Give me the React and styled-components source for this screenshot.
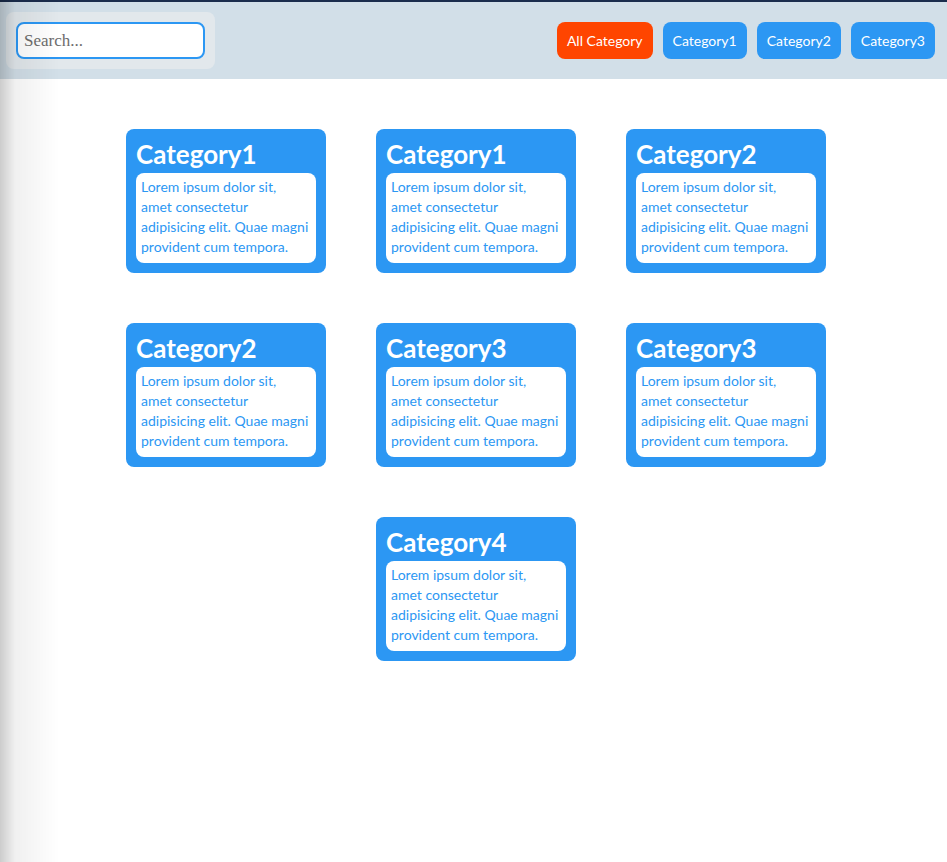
import React from "react";
import styled, { createGlobalStyle } from "styled-components";

const Global = createGlobalStyle`
  html, body { margin: 0; padding: 0; background: #fff; }
  body { font-family: "Lato", "Open Sans", sans-serif; }
  * { box-sizing: border-box; }
`;

const Page = styled.div`
  min-height: 862px;
  position: relative;
  &::after {
    content: "";
    position: fixed;
    top: 0;
    left: 0;
    bottom: 0;
    width: 60px;
    pointer-events: none;
    background: linear-gradient(to right, rgba(0,0,0,0.2), rgba(0,0,0,0.06) 15px, rgba(0,0,0,0));
  }
`;

const Header = styled.header`
  display: flex;
  align-items: center;
  justify-content: space-between;
  height: 79px;
  border-top: 2px solid #1b2d4d;
  background: #d2dfe8;
  padding: 0 12px 0 6px;
`;

const SearchBox = styled.div`
  background: #e2e8ec;
  border-radius: 8px;
  padding: 10px;
`;

const SearchInput = styled.input`
  display: block;
  width: 189px;
  height: 37px;
  border: 2px solid #2c97f3;
  border-radius: 8px;
  padding: 0 6px;
  font-family: "Liberation Serif", "Times New Roman", serif;
  font-size: 17px;
  outline: none;
  &::placeholder { color: #6d6d6d; }
`;

const Filters = styled.nav`
  display: flex;
  gap: 10px;
`;

const FilterButton = styled.button`
  height: 37px;
  padding: 0 10px;
  border: none;
  border-radius: 8px;
  background: ${(p) => (p.$active ? "#ff4500" : "#2c97f3")};
  color: #fff;
  font-family: "Lato", sans-serif;
  font-size: 14px;
  cursor: pointer;
`;

const Grid = styled.main`
  display: flex;
  flex-wrap: wrap;
  justify-content: center;
  gap: 50px;
  padding: 50px 0 0 5px;
`;

const Card = styled.article`
  width: 200px;
  height: 144px;
  background: #2c97f3;
  border-radius: 8px;
  padding: 10px;
  display: flex;
  flex-direction: column;
`;

const CardTitle = styled.h2`
  margin: 0;
  flex-shrink: 0;
  color: #fff;
  font-family: "Lato", sans-serif;
  font-weight: 700;
  font-size: 26px;
  line-height: 26px;
  height: 34px;
  padding-top: 2px;
`;

const CardBody = styled.p`
  margin: 0;
  flex: 1;
  background: #fff;
  border-radius: 8px;
  padding: 4px 5px;
  color: #2c97f3;
  font-family: "Lato", sans-serif;
  font-size: 14px;
  line-height: 20px;
  white-space: pre-line;
`;

const text = "Lorem ipsum dolor sit,\namet consectetur\nadipisicing elit. Quae magni\nprovident cum tempora.";
const cards = ["Category1", "Category1", "Category2", "Category2", "Category3", "Category3", "Category4"];

export default function App() {
  return (
    <Page>
      <Global />
      <Header>
        <SearchBox>
          <SearchInput placeholder="Search..." />
        </SearchBox>
        <Filters>
          <FilterButton $active>All Category</FilterButton>
          <FilterButton>Category1</FilterButton>
          <FilterButton>Category2</FilterButton>
          <FilterButton>Category3</FilterButton>
        </Filters>
      </Header>
      <Grid>
        {cards.map((c, i) => (
          <Card key={i}>
            <CardTitle>{c}</CardTitle>
            <CardBody>{text}</CardBody>
          </Card>
        ))}
      </Grid>
    </Page>
  );
}
